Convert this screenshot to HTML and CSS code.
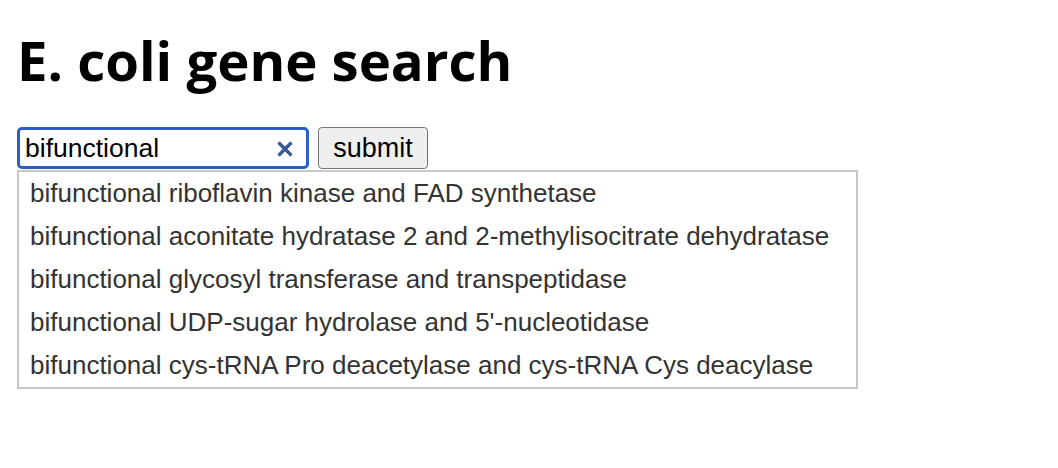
FILE: index.html
```html
<!DOCTYPE html>
<html>
<head>
<meta charset="utf-8">
<link rel="stylesheet" href="styles.css">
</head>
<body>
<h1 class="title">E. coli gene search</h1>
<form class="search">
  <div class="row">
    <div class="field">
      <input class="input" type="text" value="bifunctional">
      <span class="clear">
        <svg width="16" height="16" viewBox="0 0 16 16"><path d="M1.5 1.5 L14.5 14.5 M14.5 1.5 L1.5 14.5" stroke="#3b5998" stroke-width="3.4" stroke-linecap="butt"/></svg>
      </span>
    </div>
    <button class="submit" type="button">submit</button>
  </div>
  <ul class="suggestions">
    <li>bifunctional riboflavin kinase and FAD synthetase</li>
    <li>bifunctional aconitate hydratase 2 and 2-methylisocitrate dehydratase</li>
    <li>bifunctional glycosyl transferase and transpeptidase</li>
    <li>bifunctional UDP-sugar hydrolase and 5'-nucleotidase</li>
    <li>bifunctional cys-tRNA Pro deacetylase and cys-tRNA Cys deacylase</li>
  </ul>
</form>
</body>
</html>
```

FILE: styles.css
```css
html, body {
  margin: 0;
  padding: 0;
  background: #fff;
}
body {
  padding: 17px;
  font-family: "Liberation Sans", Arial, sans-serif;
}
.title {
  font-family: "Open Sans", sans-serif;
  font-weight: 700;
  font-size: 54.5px;
  line-height: 55px;
  margin: 16px 0 0 0;
  color: #000;
}
.search {
  margin-top: 39px;
}
.row {
  display: flex;
  align-items: stretch;
  gap: 9px;
}
.field {
  position: relative;
  width: 292px;
  height: 42px;
  box-sizing: border-box;
  border: 3px solid #2b5ec9;
  border-radius: 5px;
}
.input {
  border: none;
  outline: none;
  width: 100%;
  height: 100%;
  box-sizing: border-box;
  padding: 0 40px 0 5px;
  font-family: "Liberation Sans", Arial, sans-serif;
  font-size: 26.5px;
  color: #000;
  background: transparent;
}
.clear {
  position: absolute;
  right: 13px;
  top: 11px;
  width: 16px;
  height: 16px;
  display: flex;
}
.submit {
  height: 42px;
  width: 110px;
  box-sizing: border-box;
  border: 1.5px solid #767676;
  border-radius: 4px;
  background: #efefef;
  font-family: "Liberation Sans", Arial, sans-serif;
  font-size: 27px;
  color: #000;
  padding: 0;
}
.suggestions {
  list-style: none;
  margin: 1px 0 0 0;
  padding: 0 0 0 11px;
  width: 841px;
  box-sizing: border-box;
  border: 2px solid #c8c8c8;
}
.suggestions li {
  font-size: 26px;
  line-height: 43px;
  color: #333;
  white-space: nowrap;
}
```
